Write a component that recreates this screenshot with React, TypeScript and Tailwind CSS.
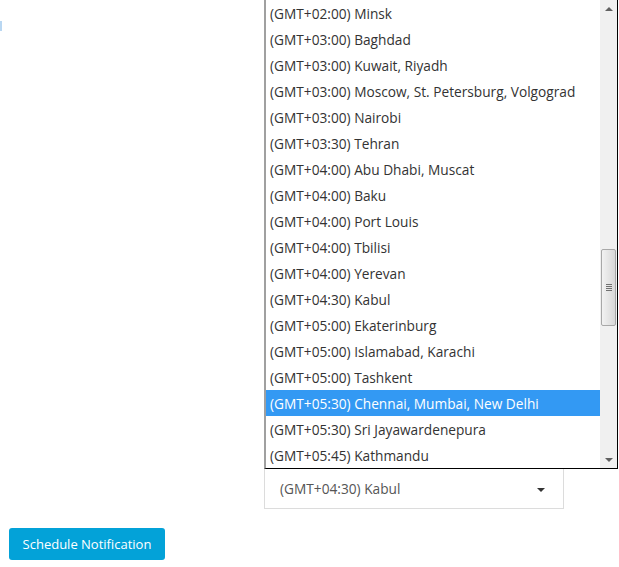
import React from 'react';

const zones = [
  '(GMT+02:00) Minsk',
  '(GMT+03:00) Baghdad',
  '(GMT+03:00) Kuwait, Riyadh',
  '(GMT+03:00) Moscow, St. Petersburg, Volgograd',
  '(GMT+03:00) Nairobi',
  '(GMT+03:30) Tehran',
  '(GMT+04:00) Abu Dhabi, Muscat',
  '(GMT+04:00) Baku',
  '(GMT+04:00) Port Louis',
  '(GMT+04:00) Tbilisi',
  '(GMT+04:00) Yerevan',
  '(GMT+04:30) Kabul',
  '(GMT+05:00) Ekaterinburg',
  '(GMT+05:00) Islamabad, Karachi',
  '(GMT+05:00) Tashkent',
  '(GMT+05:30) Chennai, Mumbai, New Delhi',
  '(GMT+05:30) Sri Jayawardenepura',
  '(GMT+05:45) Kathmandu',
];

const selected = '(GMT+05:30) Chennai, Mumbai, New Delhi';

const Scrollbar: React.FC = () => (
  <div className="w-[17px] bg-[#f0f0f0] flex flex-col items-center">
    <div className="h-[17px] w-full flex items-center justify-center">
      <div className="w-0 h-0 border-l-[4px] border-r-[4px] border-b-[4px] border-l-transparent border-r-transparent border-b-[#606060]" />
    </div>
    <div className="h-[232px]" />
    <div className="w-[15px] h-[77px] border border-[#a8a8a8] rounded-[2px] bg-gradient-to-r from-[#f2f2f2] to-[#d8d8d8] flex flex-col items-center justify-center gap-[1px]">
      <div className="w-[6px] h-px bg-[#707070]" />
      <div className="w-[6px] h-px bg-[#707070]" />
      <div className="w-[6px] h-px bg-[#707070]" />
      <div className="w-[6px] h-px bg-[#707070]" />
    </div>
    <div className="flex-1" />
    <div className="h-[17px] w-full flex items-center justify-center">
      <div className="w-0 h-0 border-l-[4px] border-r-[4px] border-t-[4px] border-l-transparent border-r-transparent border-t-[#606060]" />
    </div>
  </div>
);

const App: React.FC = () => {
  return (
    <div className="w-[619px] h-[567px] bg-white relative overflow-hidden" style={{ fontFamily: '"Open Sans", "Noto Sans", sans-serif' }}>
      <div className="absolute left-0 top-[21px] w-[2px] h-[10px] bg-[#b9d7f2]" />
      <div className="flex flex-col pl-[264px]">
        <div className="w-[354px] h-[469px] flex border-l-2 border-l-[#a0a0a0] border-r border-r-black border-b border-b-black bg-white">
          <div className="flex-1 flex flex-col">
            {zones.map((z) => (
              <div
                key={z}
                className={`h-[26px] flex items-center pt-[2px] pl-[4px] text-[13.7px] leading-none whitespace-nowrap ${
                  z === selected ? 'bg-[#3399f3] text-white' : 'text-[#333]'
                }`}
              >
                {z}
              </div>
            ))}
          </div>
          <Scrollbar />
        </div>
        <div className="w-[300px] h-[40px] border border-[#dcdcdc] border-t-0 flex items-center justify-between pt-[2px] pl-[15px] pr-[18px] text-[13.7px] text-[#555]">
          <span>(GMT+04:30) Kabul</span>
          <div className="w-0 h-0 border-l-[4px] border-r-[4px] border-t-[4px] border-l-transparent border-r-transparent border-t-[#333]" />
        </div>
      </div>
      <div className="pl-[9px] pt-[19px]">
        <button className="w-[156px] h-[32px] rounded-[3px] bg-[#03a2d8] text-white text-[13px] flex items-center justify-center pt-[2px]">
          Schedule Notification
        </button>
      </div>
    </div>
  );
};

export default App;
